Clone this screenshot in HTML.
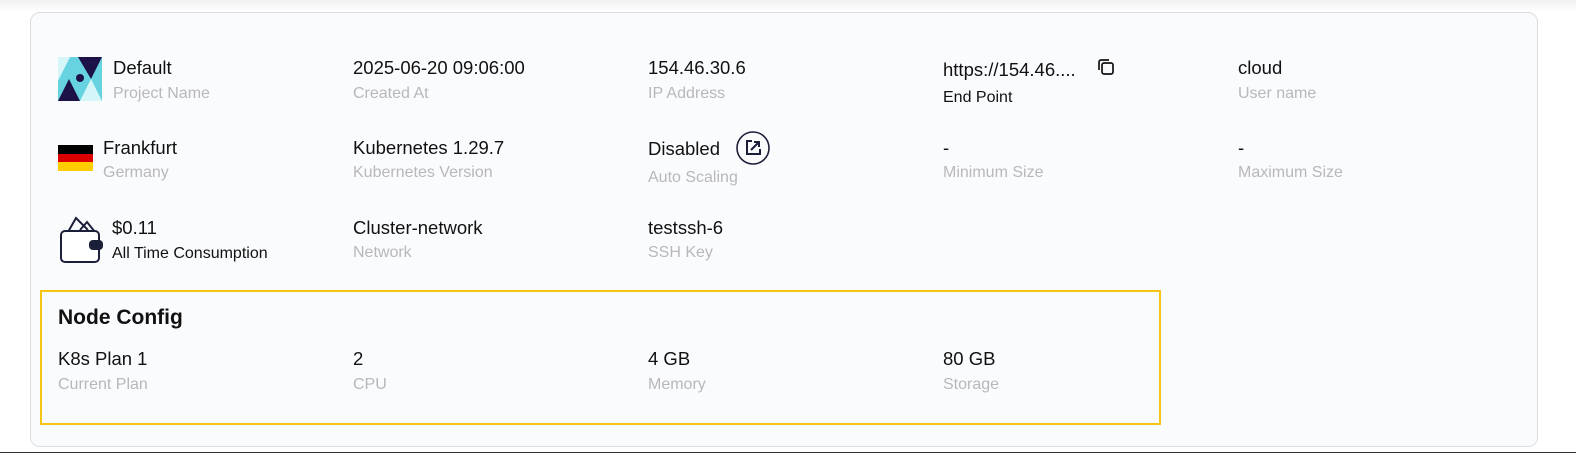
<!DOCTYPE html>
<html><head><style>
body{margin:0;width:1576px;height:456px;background:#fff;font-family:"Liberation Sans",sans-serif;position:relative;overflow:hidden}
.card{position:absolute;left:30px;top:12px;width:1506px;height:433px;border:1px solid #dcdde0;border-radius:10px;background:#fafbfd}
.t{position:absolute;white-space:nowrap}
.v{font-size:18.5px;color:#111}
.l{font-size:16px;color:#b8b8bc}
.d{font-size:16px;color:#111}
.box{position:absolute;left:40px;top:290px;width:1117px;height:131px;border:2px solid #f6c511}
</style></head><body>
<div style="position:absolute;left:0;top:0;width:1576px;height:12px;background:linear-gradient(#f0f0f0,#fff)"></div>
<div class="card"></div>
<svg style="position:absolute;left:58px;top:57px" width="44" height="44" viewBox="0 0 44 44">
<rect width="44" height="44" fill="#67d3e0"/>
<polygon points="0,0 12,0 0,24" fill="#d4f6f8"/>
<polygon points="20,0 44,0 33,22" fill="#1c1248"/>
<polygon points="0,44 11,22 22,44" fill="#1c1248"/>
<polygon points="22,44 33,22 44,44" fill="#d4f6f8"/>
<circle cx="22" cy="21" r="4" fill="#1c1248"/>
</svg>
<div class="t v" style="left:113px;top:57px">Default</div>
<div class="t l" style="left:113px;top:85px">Project Name</div>
<div class="t v" style="left:353px;top:57px">2025-06-20 09:06:00</div>
<div class="t l" style="left:353px;top:85px">Created At</div>
<div class="t v" style="left:648px;top:57px">154.46.30.6</div>
<div class="t l" style="left:648px;top:85px">IP Address</div>
<div class="t v" style="left:943px;top:59px">https://154.46....</div>
<svg style="position:absolute;left:1096px;top:57px" width="20" height="20" viewBox="0 0 20 20" fill="none" stroke="#111" stroke-width="1.7"><rect x="6" y="6" width="11" height="11" rx="2"/><path d="M3 13V5A2 2 0 0 1 5 3H13"/></svg>
<div class="t d" style="left:943px;top:89px">End Point</div>
<div class="t v" style="left:1238px;top:57px">cloud</div>
<div class="t l" style="left:1238px;top:85px">User name</div>

<div style="position:absolute;left:58px;top:145px;width:35px;height:8.6px;background:#000"></div>
<div style="position:absolute;left:58px;top:153.6px;width:35px;height:8.6px;background:#dd0000"></div>
<div style="position:absolute;left:58px;top:162.2px;width:35px;height:8.6px;background:#ffce00"></div>
<div class="t v" style="left:103px;top:137px">Frankfurt</div>
<div class="t l" style="left:103px;top:164px">Germany</div>
<div class="t v" style="left:353px;top:137px">Kubernetes 1.29.7</div>
<div class="t l" style="left:353px;top:164px">Kubernetes Version</div>
<div class="t v" style="left:648px;top:138px">Disabled</div>
<svg style="position:absolute;left:736px;top:131px" width="34" height="34" viewBox="0 0 34 34" fill="none" stroke="#1c1f3a" stroke-width="1.6"><circle cx="17" cy="17" r="16"/><path d="M16 10H11V23H24V18" stroke-width="2"/><path d="M15 19L23 11M18 11H23V16" stroke-width="2"/></svg>
<div class="t l" style="left:648px;top:169px">Auto Scaling</div>
<div class="t v" style="left:943px;top:137px">-</div>
<div class="t l" style="left:943px;top:164px">Minimum Size</div>
<div class="t v" style="left:1238px;top:137px">-</div>
<div class="t l" style="left:1238px;top:164px">Maximum Size</div>

<svg style="position:absolute;left:58px;top:214px" width="48" height="52" viewBox="0 0 48 52" fill="none" stroke="#1c1f3a" stroke-width="2"><path d="M10 18L18 4L30 16M22 16L29 8L37 18"/><rect x="3" y="17" width="38" height="31" rx="4" fill="#fff"/><rect x="32" y="27" width="12" height="8" rx="3" fill="#1c1f3a"/></svg>
<div class="t v" style="left:112px;top:217px">$0.11</div>
<div class="t d" style="left:112px;top:245px">All Time Consumption</div>
<div class="t v" style="left:353px;top:217px">Cluster-network</div>
<div class="t l" style="left:353px;top:244px">Network</div>
<div class="t v" style="left:648px;top:217px">testssh-6</div>
<div class="t l" style="left:648px;top:244px">SSH Key</div>

<div class="box"></div>
<div class="t" style="left:58px;top:306px;font-size:21px;font-weight:bold;color:#111">Node Config</div>
<div class="t v" style="left:58px;top:348px">K8s Plan 1</div>
<div class="t l" style="left:58px;top:376px">Current Plan</div>
<div class="t v" style="left:353px;top:348px">2</div>
<div class="t l" style="left:353px;top:376px">CPU</div>
<div class="t v" style="left:648px;top:348px">4 GB</div>
<div class="t l" style="left:648px;top:376px">Memory</div>
<div class="t v" style="left:943px;top:348px">80 GB</div>
<div class="t l" style="left:943px;top:376px">Storage</div>
<div style="position:absolute;left:0;top:452px;width:1576px;height:4px;background:#fff;border-top:1px solid #333"></div>
</body></html>
